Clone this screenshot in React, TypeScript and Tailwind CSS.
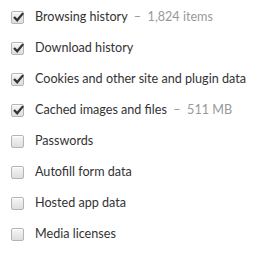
import React from "react";

const items: { label: string; extra?: string; checked: boolean }[] = [
  { label: "Browsing history", extra: "1,824 items", checked: true },
  { label: "Download history", checked: true },
  { label: "Cookies and other site and plugin data", checked: true },
  { label: "Cached images and files", extra: "511 MB", checked: true },
  { label: "Passwords", checked: false },
  { label: "Autofill form data", checked: false },
  { label: "Hosted app data", checked: false },
  { label: "Media licenses", checked: false },
];

function Box({ checked }: { checked: boolean }) {
  return (
    <span className="relative flex h-[13px] w-[13px] shrink-0 items-center justify-center rounded-[2px] border border-[#b4b4b4] bg-gradient-to-b from-[#f6f6f6] to-[#dedede] shadow-[inset_0_1px_0_#fff]">
      {checked && (
        <svg width="11" height="11" viewBox="0 0 11 11" className="absolute left-[1px] top-[0px]">
          <path d="M1.8 5.8 L4.2 8.3 L9.4 2" fill="none" stroke="#333" strokeWidth="2.3" strokeLinecap="square" />
        </svg>
      )}
    </span>
  );
}

export default function App() {
  return (
    <div className="h-[266px] w-[270px] bg-white pt-[11px] pl-[11px]" style={{ fontFamily: 'Lato, "Noto Sans", sans-serif' }}>
      <div className="flex flex-col gap-[18px]">
        {items.map((it) => (
          <div key={it.label} className="flex h-[13px] items-center gap-[11px] text-[12.6px] leading-none text-[#333]">
            <Box checked={it.checked} />
            <span className="whitespace-nowrap">
              {it.label}
              {it.extra && <span className="text-[#999]">{"\u00a0 –\u00a0 "}{it.extra}</span>}
            </span>
          </div>
        ))}
      </div>
    </div>
  );
}
